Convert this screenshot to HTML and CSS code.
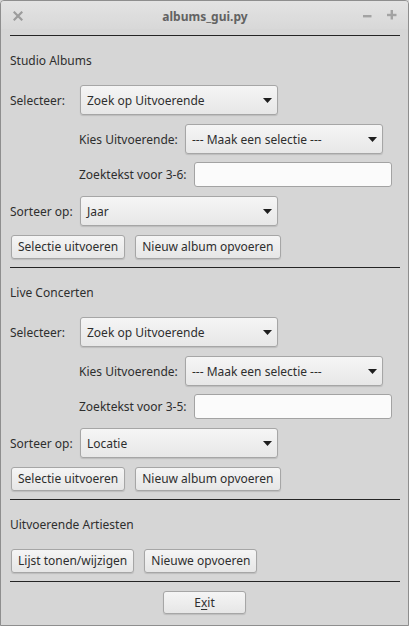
FILE: index.html
```html
<!DOCTYPE html>
<html>
<head>
<meta charset="utf-8">
<link rel="stylesheet" href="styles.css">
</head>
<body>
<div class="window">
  <div class="titlebar">
    <div class="tb-left">
      <svg class="tb-close" width="10" height="10" viewBox="0 0 10 10"><path d="M1.5 1.5 L8.5 8.5 M8.5 1.5 L1.5 8.5" stroke="#9c9c9c" stroke-width="2.2" stroke-linecap="square"/></svg>
    </div>
    <div class="title">albums_gui.py</div>
    <div class="tb-right">
      <svg class="tb-min" width="9" height="9" viewBox="0 0 9 9"><rect x="0" y="4" width="8.5" height="2.4" fill="#a3a3a3"/></svg>
      <svg class="tb-max" width="10" height="10" viewBox="0 0 10 10"><rect x="0" y="3.8" width="9.5" height="2.4" fill="#a3a3a3"/><rect x="3.6" y="0" width="2.4" height="9.5" fill="#a3a3a3"/></svg>
    </div>
  </div>
  <div class="content">
    <div class="sep first"></div>

    <div class="heading">Studio Albums</div>
    <div class="row">
      <span class="lbl lbl-main">Selecteer:</span>
      <div class="combo"><span>Zoek op Uitvoerende</span><svg class="arrow" width="9" height="5" viewBox="0 0 9 5"><path d="M0 0 H9 L4.5 5 Z" fill="#1e1e1e"/></svg></div>
    </div>
    <div class="row indent">
      <span class="lbl lbl-kies">Kies Uitvoerende:</span>
      <div class="combo"><span>--- Maak een selectie ---</span><svg class="arrow" width="9" height="5" viewBox="0 0 9 5"><path d="M0 0 H9 L4.5 5 Z" fill="#1e1e1e"/></svg></div>
    </div>
    <div class="row row-entry indent">
      <span class="lbl lbl-zoek">Zoektekst voor 3-6:</span>
      <div class="entry"></div>
    </div>
    <div class="row">
      <span class="lbl lbl-main">Sorteer op:</span>
      <div class="combo"><span>Jaar</span><svg class="arrow" width="9" height="5" viewBox="0 0 9 5"><path d="M0 0 H9 L4.5 5 Z" fill="#1e1e1e"/></svg></div>
    </div>
    <div class="buttons">
      <div class="btn">Selectie uitvoeren</div>
      <div class="btn">Nieuw album opvoeren</div>
    </div>

    <div class="sep"></div>

    <div class="heading">Live Concerten</div>
    <div class="row">
      <span class="lbl lbl-main">Selecteer:</span>
      <div class="combo"><span>Zoek op Uitvoerende</span><svg class="arrow" width="9" height="5" viewBox="0 0 9 5"><path d="M0 0 H9 L4.5 5 Z" fill="#1e1e1e"/></svg></div>
    </div>
    <div class="row indent">
      <span class="lbl lbl-kies">Kies Uitvoerende:</span>
      <div class="combo"><span>--- Maak een selectie ---</span><svg class="arrow" width="9" height="5" viewBox="0 0 9 5"><path d="M0 0 H9 L4.5 5 Z" fill="#1e1e1e"/></svg></div>
    </div>
    <div class="row row-entry indent">
      <span class="lbl lbl-zoek">Zoektekst voor 3-5:</span>
      <div class="entry"></div>
    </div>
    <div class="row">
      <span class="lbl lbl-main">Sorteer op:</span>
      <div class="combo"><span>Locatie</span><svg class="arrow" width="9" height="5" viewBox="0 0 9 5"><path d="M0 0 H9 L4.5 5 Z" fill="#1e1e1e"/></svg></div>
    </div>
    <div class="buttons">
      <div class="btn">Selectie uitvoeren</div>
      <div class="btn">Nieuw album opvoeren</div>
    </div>

    <div class="sep"></div>

    <div class="heading">Uitvoerende Artiesten</div>
    <div class="buttons buttons-first">
      <div class="btn">Lijst tonen/wijzigen</div>
      <div class="btn">Nieuwe opvoeren</div>
    </div>

    <div class="sep"></div>

    <div class="exit-row">
      <div class="btn btn-exit">E<span class="mn">x</span>it</div>
    </div>
  </div>
</div>
</body>
</html>
```

FILE: styles.css
```css
* { box-sizing: border-box; }
html, body {
  margin: 0;
  padding: 0;
  background: #d6d6d6;
}
body {
  font-family: "Noto Sans", "Open Sans", sans-serif;
  font-size: 12px;
  color: #2e2e2e;
}
.window {
  width: 409px;
  height: 626px;
  border: 1px solid #8e8e8e;
  border-radius: 4px 4px 0 0;
  background: #d6d6d6;
  overflow: hidden;
  display: flex;
  flex-direction: column;
}
.titlebar {
  height: 28px;
  flex: 0 0 28px;
  display: grid;
  grid-template-columns: 1fr auto 1fr;
  align-items: center;
  padding: 0 11px 0 12px;
  background: linear-gradient(#e3e3e3, #d8d8d8);
}
.tb-left { display: flex; align-items: center; }
.tb-close { display: block; margin-top: 1px; }
.title {
  font-weight: bold;
  font-size: 12px;
  color: #626262;
  margin-top: 2px;
}
.tb-right {
  display: flex;
  align-items: center;
  justify-content: flex-end;
  gap: 15px;
}
.tb-min, .tb-max { display: block; }
.content {
  padding: 0 8px 0 9px;
  display: flex;
  flex-direction: column;
}
.sep {
  height: 1px;
  background: #252525;
  margin-top: 8px;
}
.sep.first { margin-top: 6px; }
.heading {
  margin-top: 15px;
  height: 20px;
  line-height: 20px;
}
.row {
  display: flex;
  align-items: center;
  height: 30px;
  margin-top: 9px;
}
.heading + .row { margin-top: 14px; }
.row-entry { height: 25px; margin-top: 8px; }
.row-entry + .row { margin-top: 9px; }
.indent { padding-left: 69px; }
.lbl { flex: 0 0 auto; }
.lbl-main { width: 70px; }
.lbl-kies { width: 106px; }
.lbl-zoek { width: 115px; }
.combo {
  width: 198px;
  height: 30px;
  border: 1px solid #a6a6a6;
  border-radius: 3px;
  background: linear-gradient(#f5f5f5, #e7e7e7);
  box-shadow: 0 1px 1px rgba(0,0,0,0.12);
  display: flex;
  align-items: center;
  justify-content: space-between;
  padding: 0 5px 0 6px;
}
.combo span { padding-top: 1px; }
.arrow { display: block; margin-top: 1px; }
.entry {
  width: 198px;
  height: 25px;
  border: 1px solid #a3a3a3;
  border-radius: 3px;
  background: #fbfbfb;
}
.buttons {
  display: flex;
  gap: 10px;
  margin-top: 9px;
  padding-left: 1px;
}
.buttons-first { margin-top: 14px; }
.btn {
  height: 24px;
  line-height: 22px;
  border: 1px solid #a6a6a6;
  border-radius: 3px;
  background: linear-gradient(#f5f5f5, #e6e6e6);
  box-shadow: 0 1px 1px rgba(0,0,0,0.12);
  padding: 0 6px;
  white-space: nowrap;
}
.exit-row {
  display: flex;
  justify-content: center;
  margin-top: 9px;
  padding-right: 1px;
}
.btn-exit {
  width: 83px;
  height: 23px;
  line-height: 21px;
  text-align: center;
}
.mn { text-decoration: underline; text-underline-offset: 2px; }
```
